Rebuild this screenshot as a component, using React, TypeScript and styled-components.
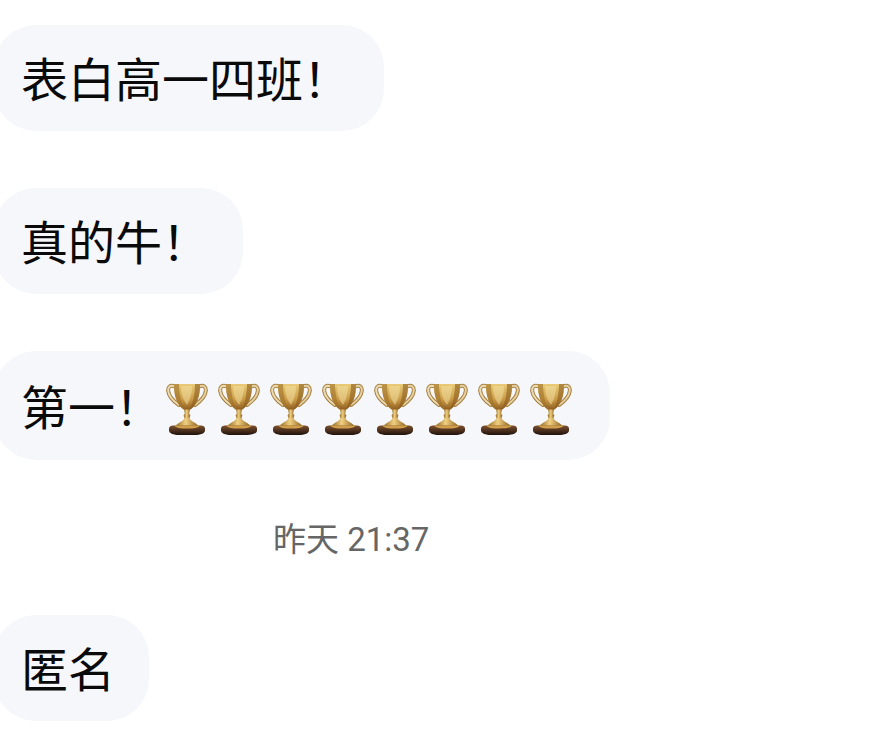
import React from "react";
import styled, { createGlobalStyle } from "styled-components";

const GlobalStyle = createGlobalStyle`
  html, body {
    margin: 0;
    padding: 0;
    background: #fff;
    overflow: hidden;
  }
`;

const Chat = styled.div`
  width: 891px;
  height: 739px;
  overflow: hidden;
  padding-top: 25px;
  box-sizing: border-box;
  display: flex;
  flex-direction: column;
  align-items: flex-start;
  font-family: "Liberation Sans", "Noto Sans CJK SC", sans-serif;
`;

const Bubble = styled.div<{ $tall?: boolean; $right?: number; $after?: number }>`
  flex: none;
  height: ${(p) => (p.$tall ? 109 : 106)}px;
  margin-left: -6px;
  margin-bottom: ${(p) => p.$after ?? 57}px;
  padding: 5px ${(p) => p.$right ?? 34}px 0 27px;
  box-sizing: border-box;
  display: flex;
  align-items: center;
  background: #f6f7fb;
  border-radius: 42px;
  color: #0a0a0a;
  font-size: 47px;
  line-height: 1;
  white-space: nowrap;
`;

const Cups = styled.div`
  display: flex;
  gap: 10px;
  margin-left: 4px;
  margin-top: 3px;
`;

const Stamp = styled.div`
  flex: none;
  margin: 3px 0 53px 273px;
  height: 44px;
  line-height: 44px;
  color: #666;
  font-size: 33px;
  font-family: Roboto, "Noto Sans CJK SC", sans-serif;
  white-space: nowrap;
`;

function Trophy({ id }: { id: string }) {
  return (
    <svg width="42" height="53" viewBox="0 0 42 53" aria-hidden="true">
      <defs>
        <linearGradient id={`${id}-gold`} x1="0" x2="1" y1="0" y2="0">
          <stop offset="0" stopColor="#8f6420" />
          <stop offset="0.45" stopColor="#f0d081" />
          <stop offset="1" stopColor="#8a5d1c" />
        </linearGradient>
        <linearGradient id={`${id}-bowl`} x1="0" x2="0" y1="0" y2="1">
          <stop offset="0" stopColor="#e9cb78" />
          <stop offset="0.6" stopColor="#c99a45" />
          <stop offset="1" stopColor="#8f5c20" />
        </linearGradient>
        <linearGradient id={`${id}-base`} x1="0" x2="0" y1="0" y2="1">
          <stop offset="0" stopColor="#7d5230" />
          <stop offset="1" stopColor="#1f110b" />
        </linearGradient>
      </defs>
      {/* handles: brown rim with a pale inside */}
      <g fill="none" strokeLinecap="round">
        <path d="M9 3.500C4 1.500 1.800 4 2.200 8c.6 5 5 10 10.800 14" stroke="#a88244" strokeWidth="4" />
        <path d="M9 3.500C4 1.500 1.800 4 2.200 8c.6 5 5 10 10.800 14" stroke="#ecdcb4" strokeWidth="2" />
        <path d="M33 3.500C38 1.500 40.200 4 39.800 8c-.6 5-5 10-10.800 14" stroke="#a88244" strokeWidth="4" />
        <path d="M33 3.500C38 1.500 40.200 4 39.800 8c-.6 5-5 10-10.800 14" stroke="#e4d0a0" strokeWidth="2" />
      </g>
      <path d="M8 1h26c.5 12-3.500 22-10.500 26h-5C11.500 23 7.500 13 8 1z" fill={`url(#${id}-bowl)`} />
      <path d="M8 1h5c0 10 2 19 6 26h-.5C11.500 23 7.500 13 8 1z" fill="#9c6f28" opacity="0.6" />
      <path d="M29 1h5c.5 12-3.500 22-10.500 26H23c4-7 6-16 6-26z" fill="#8a5b1e" opacity="0.6" />
      <path d="M15 3h11c0 8-2 14-5 19-4-5-6-11-6-19z" fill="#f6e4a8" opacity="0.5" />
      <path d="M18 26.500h6l-.8 4 1.200 2-1.200 3.500h-4.400l-1.200-3.500 1.200-2z" fill={`url(#${id}-gold)`} />
      <path d="M18.500 35h5c1 3.500 7 4.500 9.500 8.500H9c2.500-4 8.500-5 9.500-8.500z" fill={`url(#${id}-gold)`} />
      <path d="M3 45.500c0-2 2-3 4-3h28c2 0 4 1 4 3v2c0 3-5 4.500-10 4.500H13c-5 0-10-1.500-10-4.500z" fill={`url(#${id}-base)`} />
      <path d="M8 42.500h26c-2 2.500-6 3-13 3s-11-.5-13-3z" fill="#cf9f4c" />
    </svg>
  );
}

const cups = ["a", "b", "c", "d", "e", "f", "g", "h"];

export default function App() {
  return (
    <>
      <GlobalStyle />
      <Chat>
        <Bubble>表白高一四班！</Bubble>
        <Bubble>真的牛！</Bubble>
        <Bubble $tall $right={38} $after={55}>
          第一！
          <Cups>
            {cups.map((c) => (
              <Trophy key={c} id={c} />
            ))}
          </Cups>
        </Bubble>
        <Stamp>昨天 21:37</Stamp>
        <Bubble>匿名</Bubble>
      </Chat>
    </>
  );
}
